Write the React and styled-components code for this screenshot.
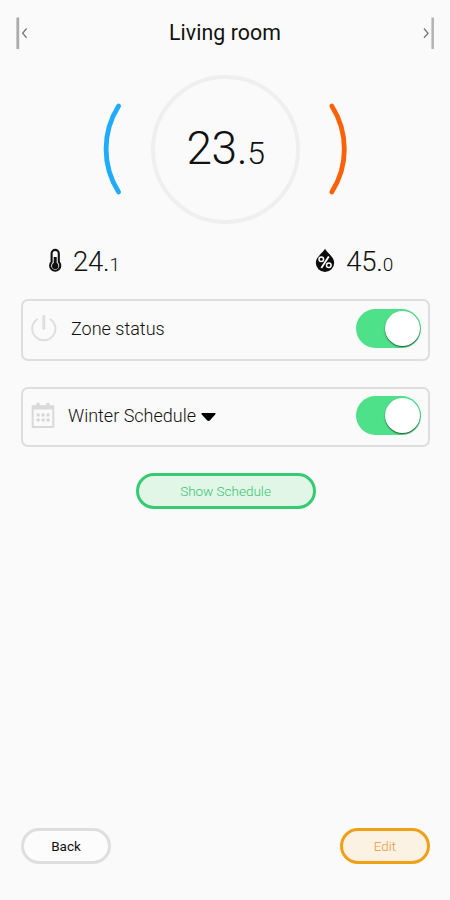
import React from 'react';
import styled, { createGlobalStyle } from 'styled-components';

const Global = createGlobalStyle`
  * { box-sizing: border-box; }
  body { margin: 0; background: #fafafa; font-family: Roboto, "Liberation Sans", sans-serif; color: #111; }
  button { font-family: inherit; margin: 0; padding: 0; cursor: pointer; }
  svg { display: block; flex: none; }
`;

const Screen = styled.main`
  width: 450px;
  height: 900px;
  display: flex;
  flex-direction: column;
  background: #fafafa;
  overflow: hidden;
`;

const Header = styled.header`
  height: 66px;
  padding: 0 16px;
  display: flex;
  align-items: center;
  justify-content: space-between;
`;

const Title = styled.h1`
  margin: 0;
  font-size: 21.3px;
  line-height: 26px;
  font-weight: 400;
  letter-spacing: ${(p) => p.$tracking || 0}px;
`;

const EdgeButton = styled.button`
  border: 0;
  background: none;
  width: 12px;
  height: 33px;
`;

const Thermostat = styled.section`
  height: 166px;
  display: grid;
  grid-template-columns: 24px 149px 24px;
  justify-content: center;
  align-items: center;
  column-gap: 25px;
  padding-left: 1px;
`;

const Dial = styled.div`
  width: 149px;
  height: 149px;
  border: 4px solid #efefef;
  border-radius: 50%;
  display: flex;
  align-items: center;
  justify-content: center;
  padding-bottom: 2px;
`;

const Reading = styled.span`
  display: flex;
  align-items: baseline;
  font-weight: 300;
  font-size: ${(p) => p.$size}px;
  line-height: 1;
  letter-spacing: ${(p) => p.$tracking || 0}px;
`;

const Fraction = styled.span`
  font-size: ${(p) => p.$size}px;
`;

const Sensors = styled.section`
  height: 66.5px;
  padding: 0 57px 8px 47px;
  display: flex;
  align-items: center;
  justify-content: space-between;
`;

const Sensor = styled.div`
  display: flex;
  align-items: center;
  gap: ${(p) => p.$gap}px;
`;

const Cards = styled.section`
  padding: 0 20px 0 21px;
  display: flex;
  flex-direction: column;
  gap: 26px;
`;

const Card = styled.div`
  height: ${(p) => p.$height}px;
  border: 2.4px solid #dedede;
  border-radius: 7px;
  display: flex;
  align-items: center;
  padding: 0 7px 2px 8px;
`;

const CardLabel = styled.span`
  flex: 1;
  display: flex;
  align-items: center;
  gap: 5px;
  padding-left: ${(p) => p.$indent}px;
  font-size: 18px;
  line-height: 22px;
  font-weight: 300;
`;

const Toggle = styled.button`
  width: 65px;
  height: 39px;
  border: 0;
  border-radius: 20px;
  background: #4fe18a;
  display: flex;
  align-items: center;
  justify-content: flex-end;
  padding-right: 1px;
`;

const Knob = styled.span`
  width: 35px;
  height: 35px;
  border-radius: 50%;
  background: #fff;
  box-shadow: 0 1px 1.5px rgba(0, 40, 20, 0.75);
`;

const Pill = styled.button`
  width: ${(p) => p.$width}px;
  height: 36px;
  border: 3px solid ${(p) => p.$border};
  border-radius: 18px;
  background: ${(p) => p.$fill};
  color: ${(p) => p.$color};
  font-size: 13.5px;
  font-weight: ${(p) => p.$weight || 300};
`;

const CenterRow = styled.div`
  display: flex;
  justify-content: center;
  padding: 26px 0 0 1px;
`;

const Footer = styled.footer`
  margin-top: auto;
  padding: 0 20px 36px 21px;
  display: flex;
  justify-content: space-between;
`;

const EdgeLeft = () => (
  <svg width="12" height="33" viewBox="0 0 12 33" fill="none">
    <path d="M1.8 0.5V32" stroke="#ababab" strokeWidth="2.8" />
    <path d="M10.6 11.5L6.6 16.3L10.6 20.8" stroke="#777" strokeWidth="1.3" />
  </svg>
);

const EdgeRight = () => (
  <svg width="12" height="33" viewBox="0 0 12 33" fill="none">
    <path d="M10.8 0.5V32" stroke="#b5b5b5" strokeWidth="2.8" />
    <path d="M2 11.5L6 16.3L2 20.8" stroke="#777" strokeWidth="1.3" />
  </svg>
);

const CoolArc = () => (
  <svg width="24" height="96" viewBox="0 0 24 96" fill="none">
    <path d="M16.6 5A80 80 0 0 0 16.6 91" stroke="#1eacfc" strokeWidth="4.8" strokeLinecap="round" />
  </svg>
);

const HeatArc = () => (
  <svg width="24" height="96" viewBox="0 0 24 96" fill="none">
    <path d="M6.8 5A80 80 0 0 1 6.8 91" stroke="#fb6107" strokeWidth="4.8" strokeLinecap="round" />
  </svg>
);

const Thermometer = () => (
  <svg width="16" height="26" viewBox="0 0 16 26" fill="none">
    <path d="M4.6 14V5.5A3.6 3.6 0 0 1 11.8 5.5V14A5.1 5.1 0 1 1 4.6 14Z" stroke="#111" strokeWidth="2.1" />
    <path d="M8.2 9V18" stroke="#111" strokeWidth="3" />
    <circle cx="8.2" cy="18" r="3.2" fill="#111" />
  </svg>
);

const Droplet = () => (
  <svg width="20" height="26" viewBox="0 0 20 26" fill="none">
    <path d="M10 0.8C8 5 0.8 8.7 0.8 14.7A9.2 9.2 0 0 0 19.2 14.7C19.2 8.7 12 5 10 0.8Z" fill="#0c0c0c" />
    <circle cx="6.3" cy="11.2" r="2.3" stroke="#fff" strokeWidth="1.5" />
    <circle cx="13.8" cy="17.2" r="2.3" stroke="#fff" strokeWidth="1.5" />
    <path d="M13.8 8.6L6.3 20" stroke="#fff" strokeWidth="1.8" />
  </svg>
);

const Power = () => (
  <svg width="26" height="28" viewBox="0 0 26 28" fill="none">
    <path d="M6.2 4.2A11.6 11.6 0 1 0 19.4 4.2" stroke="#dedede" strokeWidth="2" strokeLinecap="round" />
    <path d="M12.8 1.5V13.5" stroke="#dedede" strokeWidth="2.8" strokeLinecap="round" />
  </svg>
);

const Calendar = () => (
  <svg width="24" height="28" viewBox="0 0 24 28" fill="none">
    <path d="M1.7 4.2H22.3V25H1.7Z" stroke="#dadada" strokeWidth="2.1" strokeLinejoin="round" />
    <path d="M1 3.5H23V7.5H1Z" fill="#dadada" />
    <path d="M7 2.1V4M17 2.1V4" stroke="#dadada" strokeWidth="3.4" strokeLinecap="round" />
    <path d="M5.6 13H18.6M5.6 18H18.6" stroke="#d6d6d6" strokeWidth="3" strokeDasharray="3 2" />
  </svg>
);

const Caret = () => (
  <svg width="15" height="14" viewBox="0 0 15 14">
    <path d="M1 4H14Q15.2 4.3 14.2 5.6L9 11.3Q7.5 12.8 6 11.3L0.8 5.6Q-0.2 4.3 1 4Z" fill="#000" />
  </svg>
);

const Switch = ({ label }) => (
  <Toggle role="switch" aria-checked="true" aria-label={label}>
    <Knob />
  </Toggle>
);

export default function App() {
  return (
    <Screen>
      <Global />
      <Header>
        <EdgeButton aria-label="Previous room"><EdgeLeft /></EdgeButton>
        <Title $tracking={0.1}>Living room</Title>
        <EdgeButton aria-label="Next room"><EdgeRight /></EdgeButton>
      </Header>
      <Thermostat>
        <CoolArc />
        <Dial>
          <Reading $size={46} $tracking={-0.5}>23.<Fraction $size={32}>5</Fraction></Reading>
        </Dial>
        <HeatArc />
      </Thermostat>
      <Sensors>
        <Sensor $gap={10}>
          <Thermometer />
          <Reading $size={27.5} $tracking={-0.2}>24.<Fraction $size={19}>1</Fraction></Reading>
        </Sensor>
        <Sensor $gap={11}>
          <Droplet />
          <Reading $size={27.5} $tracking={-0.2}>45.<Fraction $size={19}>0</Fraction></Reading>
        </Sensor>
      </Sensors>
      <Cards>
        <Card $height={62}>
          <Power />
          <CardLabel $indent={14}>Zone status</CardLabel>
          <Switch label="Zone status" />
        </Card>
        <Card $height={60}>
          <Calendar />
          <CardLabel $indent={13}>Winter Schedule <Caret /></CardLabel>
          <Switch label="Winter Schedule" />
        </Card>
      </Cards>
      <CenterRow>
        <Pill $width={180} $border="#35cb70" $fill="#e2f6e8" $color="#35c56e">Show Schedule</Pill>
      </CenterRow>
      <Footer>
        <Pill $width={90} $border="#dedede" $fill="#fcfcfc" $color="#111" $weight={400}>Back</Pill>
        <Pill $width={90} $border="#f0a016" $fill="#fbf2e4" $color="#f09830">Edit</Pill>
      </Footer>
    </Screen>
  );
}
